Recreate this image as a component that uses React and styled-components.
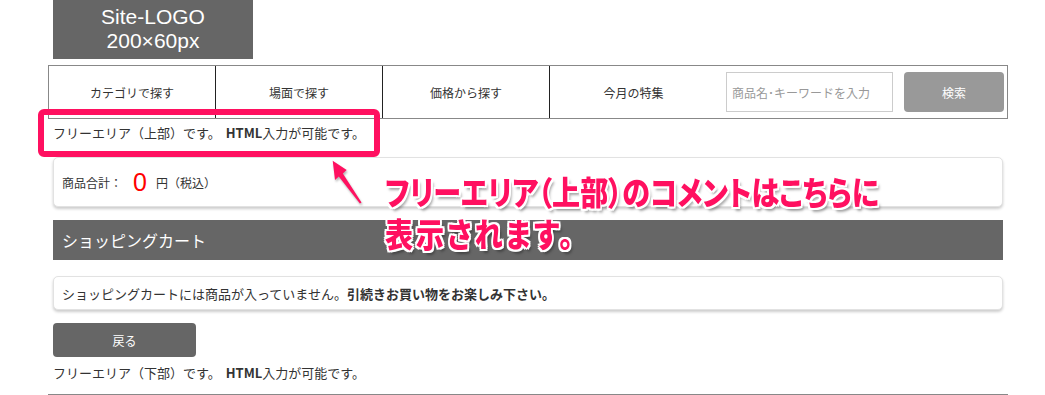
import React from 'react';
import styled, { createGlobalStyle } from 'styled-components';

const GlobalStyle = createGlobalStyle`
    body {
        margin: 0;
        background: #fff;
        color: #333;
        font-family: "Noto Sans CJK JP", "Noto Sans", sans-serif;
        font-size: 12px;
    }
`;

const Page = styled.div`
    position: relative;
    width: 960px;
    margin-left: 48px;
`;

const Header = styled.header`
    padding: 0 5px;
`;

const Logo = styled.div`
    width: 200px;
    height: 59px;
    box-sizing: border-box;
    padding-top: 5px;
    background: #666;
    color: #fff;
    font-family: "Liberation Sans", Arial, sans-serif;
    font-size: 21px;
    line-height: 24px;
    text-align: center;
`;

const Nav = styled.nav`
    display: flex;
    align-items: center;
    height: 54px;
    margin-top: 6px;
    box-sizing: border-box;
    border: 1px solid #888;
`;

const NavItem = styled.div`
    width: 167px;
    height: 100%;
    display: flex;
    align-items: center;
    justify-content: center;
    box-sizing: border-box;
    border-right: ${p => (p.last ? 'none' : '1px solid #222')};
    flex-shrink: 0;
`;

const Search = styled.form`
    display: flex;
    gap: 11px;
    margin-left: 9px;
`;

const SearchInput = styled.input`
    width: 167px;
    height: 40px;
    box-sizing: border-box;
    border: 1px solid #ccc;
    padding: 0 5px;
    font-family: inherit;
    font-size: 12px;
    color: #333;
    outline: none;
    &::placeholder { color: #999; }
`;

const SearchButton = styled.button`
    width: 100px;
    height: 40px;
    border: none;
    border-radius: 4px;
    background: #999;
    color: #fff;
    font-family: inherit;
    font-size: 12px;
`;

const Main = styled.main`
    padding: 0 5px;
`;

const FreeArea = styled.p`
    margin: 0;
    font-size: 13px;
    line-height: 20px;
    padding: ${p => (p.bottom ? '6px 0 11px' : '4px 0 14px')};
    b { margin-left: 5px; }
`;

const Card = styled.div`
    display: flex;
    align-items: center;
    box-sizing: border-box;
    height: ${p => p.h}px;
    padding: 0 8px;
    border: 1px solid #e2e2e2;
    border-radius: 5px;
    box-shadow: 0 2px 3px rgba(0, 0, 0, 0.2);
    background: #fff;
    font-size: ${p => p.size || 12}px;
`;

const Total = styled.span`
    margin: 0 9px 0 11px;
    color: #f00;
    font-family: "Liberation Sans", Arial, sans-serif;
    font-size: 25px;
    line-height: 1;
`;

const SectionTitle = styled.h2`
    margin: 13px 0 16px;
    height: 40px;
    padding-left: 9px;
    display: flex;
    align-items: center;
    background: #666;
    color: #fff;
    font-size: 16px;
    font-weight: normal;
`;

const BackButton = styled.button`
    display: block;
    width: 143px;
    height: 34px;
    margin-top: 13px;
    border: none;
    border-radius: 4px;
    background: #666;
    color: #fff;
    font-family: inherit;
    font-size: 12px;
`;

const Rule = styled.hr`
    margin: 0;
    border: none;
    border-top: 1px solid #888;
`;

const Highlight = styled.div`
    position: absolute;
    left: -10px;
    top: 109px;
    width: 342px;
    height: 48px;
    box-sizing: border-box;
    border: 6px solid #ff1060;
    border-radius: 6px;
`;

const Arrow = styled.svg`
    position: absolute;
    left: 272px;
    top: 150px;
    filter: drop-shadow(1px 2px 1px rgba(0, 0, 0, 0.3));
`;

const Note = styled.div`
    position: absolute;
    left: 337px;
    top: 170px;
    color: #ff1060;
    font-size: 33px;
    font-weight: 900;
    line-height: 42px;
    font-feature-settings: "palt";
    white-space: nowrap;
    transform: scaleX(0.85);
    transform-origin: left top;
    text-shadow:
        2px 0 0 #fff, -2px 0 0 #fff, 0 2px 0 #fff, 0 -2px 0 #fff,
        2px 2px 0 #fff, -2px -2px 0 #fff, 2px -2px 0 #fff, -2px 2px 0 #fff,
        3px 4px 3px rgba(0, 0, 0, 0.35);
`;

const NoteLine = styled.span`
    letter-spacing: ${p => p.spacing || 0}px;
`;

const navItems = ['カテゴリで探す', '場面で探す', '価格から探す', '今月の特集'];

export default function App() {
    return (
        <>
            <GlobalStyle />
            <Page>
                <Header>
                    <Logo>Site-LOGO<br />200×60px</Logo>
                </Header>
                <Nav>
                    {navItems.map((label, i) => (
                        <NavItem key={label} last={i === navItems.length - 1}>{label}</NavItem>
                    ))}
                    <Search onSubmit={e => e.preventDefault()}>
                        <SearchInput placeholder="商品名･キーワードを入力" />
                        <SearchButton type="submit">検索</SearchButton>
                    </Search>
                </Nav>
                <Main>
                    <FreeArea>フリーエリア（上部）です。<b>HTML</b>入力が可能です。</FreeArea>
                    <Card h={50}>
                        商品合計：<Total>0</Total>円（税込）
                    </Card>
                    <SectionTitle>ショッピングカート</SectionTitle>
                    <Card h={34} size={13}>
                        ショッピングカートには商品が入っていません。<b>引続きお買い物をお楽しみ下さい。</b>
                    </Card>
                    <BackButton>戻る</BackButton>
                    <FreeArea bottom>フリーエリア（下部）です。<b>HTML</b>入力が可能です。</FreeArea>
                </Main>
                <Rule />

                <Highlight />
                <Arrow width="60" height="60" viewBox="0 0 60 60">
                    <polygon
                        fill="#ff1060"
                        points="12.7,10.7 26.7,20 22.8,23.5 41.5,52.4 39.9,53.6 18.8,26.5 15,30"
                    />
                </Arrow>
                <Note>
                    <NoteLine>フリーエリア（上部）のコメントはこちらに</NoteLine><br />
                    <NoteLine spacing={3.5}>表示されます。</NoteLine>
                </Note>
            </Page>
        </>
    );
}
